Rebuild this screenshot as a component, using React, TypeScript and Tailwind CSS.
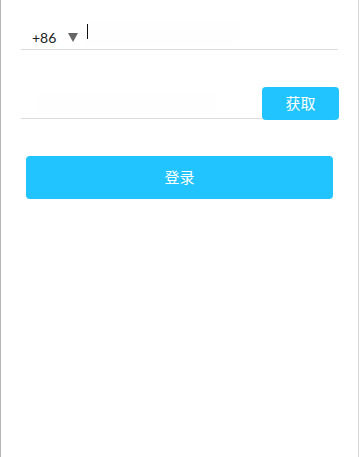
import React from "react";

export default function App() {
  return (
    <div
      className="w-[359px] h-[457px] bg-white border-l border-l-[#b5b5b5] border-r border-r-[#d8d8d8] box-border relative"
      style={{ fontFamily: '"Lato", "Noto Sans CJK SC", sans-serif' }}
    >
      <div className="pt-[19px] pl-[20px] pr-[20px]">
        <div className="h-[31px] border-b border-[#dcdcdc] flex items-center">
          <span className="ml-[11px] text-[14px] text-[#222] leading-none mt-[8px]">+86</span>
          <span className="ml-[12px] mt-[6px] w-0 h-0 border-l-[5px] border-r-[5px] border-t-[9px] border-l-transparent border-r-transparent border-t-[#666]"></span>
          <div className="ml-[9px] h-[23px] w-[152px] bg-[#fefefe] flex items-start">
            <span className="w-[1px] h-[15px] bg-[#111] mt-[1px]"></span>
          </div>
        </div>
        <div className="mt-[37px] flex items-end">
          <div className="flex-1 h-[31px] border-b border-[#dcdcdc] flex items-end pb-[5px]">
            <div className="ml-[14px] h-[18px] w-[180px] bg-[#fefefe]"></div>
          </div>
          <button className="w-[77px] h-[33px] mb-[-1px] mr-[-1px] rounded-[4px] bg-[#21c4fe] text-white text-[15px] flex items-center justify-center">
            获取
          </button>
        </div>
        <button className="mt-[37px] ml-[5px] w-[307px] h-[43px] rounded-[4px] bg-[#21c4fe] text-white text-[15px] flex items-center justify-center">
          登录
        </button>
      </div>
    </div>
  );
}
